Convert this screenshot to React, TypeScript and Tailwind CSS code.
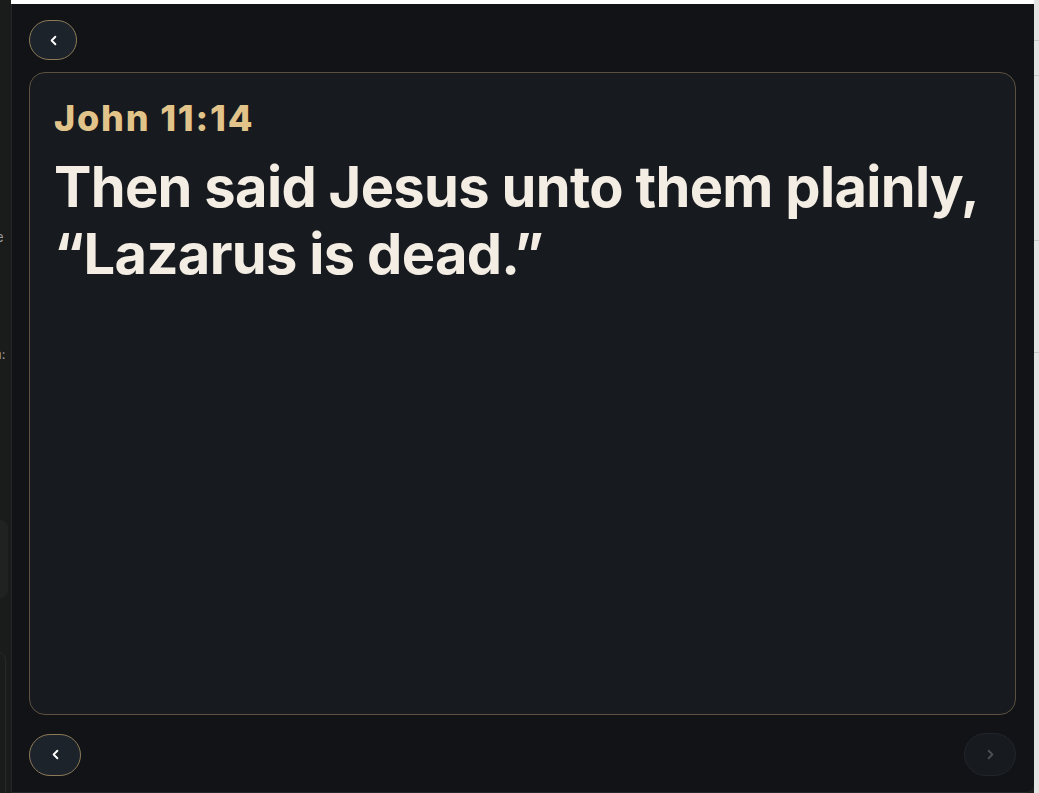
import { ChevronLeft, ChevronRight } from "lucide-react";

const App = () => {
  return (
    <main
      className="flex h-[793px] w-full overflow-hidden bg-[#1b1c1c]"
      style={{ fontFamily: "Inter, 'Noto Sans', sans-serif" }}
    >
      {/* page behind the modal, left edge */}
      <div className="relative w-[11px] shrink-0 bg-[#1a1b1b] text-[13px] text-[#9a9a9a]">
        <span className="absolute left-[-4px] top-[228px]">e</span>
        <span className="absolute left-[-6px] top-[345px]">n:</span>
        <div className="absolute left-[-20px] top-[520px] h-[78px] w-[28px] rounded-lg bg-[#202221]" />
        <div className="absolute left-[-20px] top-[652px] h-[160px] w-[26px] rounded-lg border border-[#272828]" />
      </div>

      <div className="flex flex-1 flex-col">
        <div className="h-[4px] shrink-0 bg-white" />
        <section className="flex flex-1 flex-col rounded-br-lg border-b border-l border-[#24262a] bg-[#111317] pb-[16px] pl-[17px] pr-[18px] pt-[16px]">
          <div>
            <button className="flex h-[40px] w-[48px] items-center justify-center rounded-full border border-[#8c7a57] bg-[#1c232b] text-white">
              <ChevronLeft size={15} strokeWidth={3} />
            </button>
          </div>

          <div className="mt-[12px] flex-1 rounded-2xl border border-[#5c5140] bg-[#171a1f] px-[24px] pt-[24px]">
            <h2 className="text-[36px] font-extrabold leading-[1.2] tracking-[0.05em] text-[#e2c48a]">
              John 11:14
            </h2>
            <p className="mt-[14px] text-[56px] font-bold leading-[1.2] tracking-[-0.012em] text-[#f3ede4]">
              Then said Jesus unto them plainly, “Lazarus is dead.”
            </p>
          </div>

          <div className="mt-[18px] flex items-center justify-between">
            <button className="flex h-[42px] w-[52px] items-center justify-center rounded-full border border-[#8c7a57] bg-[#1c232b] text-white">
              <ChevronLeft size={15} strokeWidth={3} />
            </button>
            <button className="flex h-[43px] w-[52px] items-center justify-center rounded-full border border-[#22262b] bg-[#171a1f] text-[#4b4f55]">
              <ChevronRight size={15} strokeWidth={3} />
            </button>
          </div>
        </section>
      </div>

      {/* page behind the modal, right edge */}
      <div className="relative w-[5px] shrink-0 bg-[#e4e4e4]">
        <div className="absolute left-0 top-[40px] h-px w-full bg-[#c9c9c9]" />
        <div className="absolute left-0 top-[75px] h-px w-full bg-[#c9c9c9]" />
        <div className="absolute left-0 top-[240px] h-px w-full bg-[#c9c9c9]" />
        <div className="absolute left-0 top-[352px] h-px w-full bg-[#c9c9c9]" />
      </div>
    </main>
  );
};

export default App;
